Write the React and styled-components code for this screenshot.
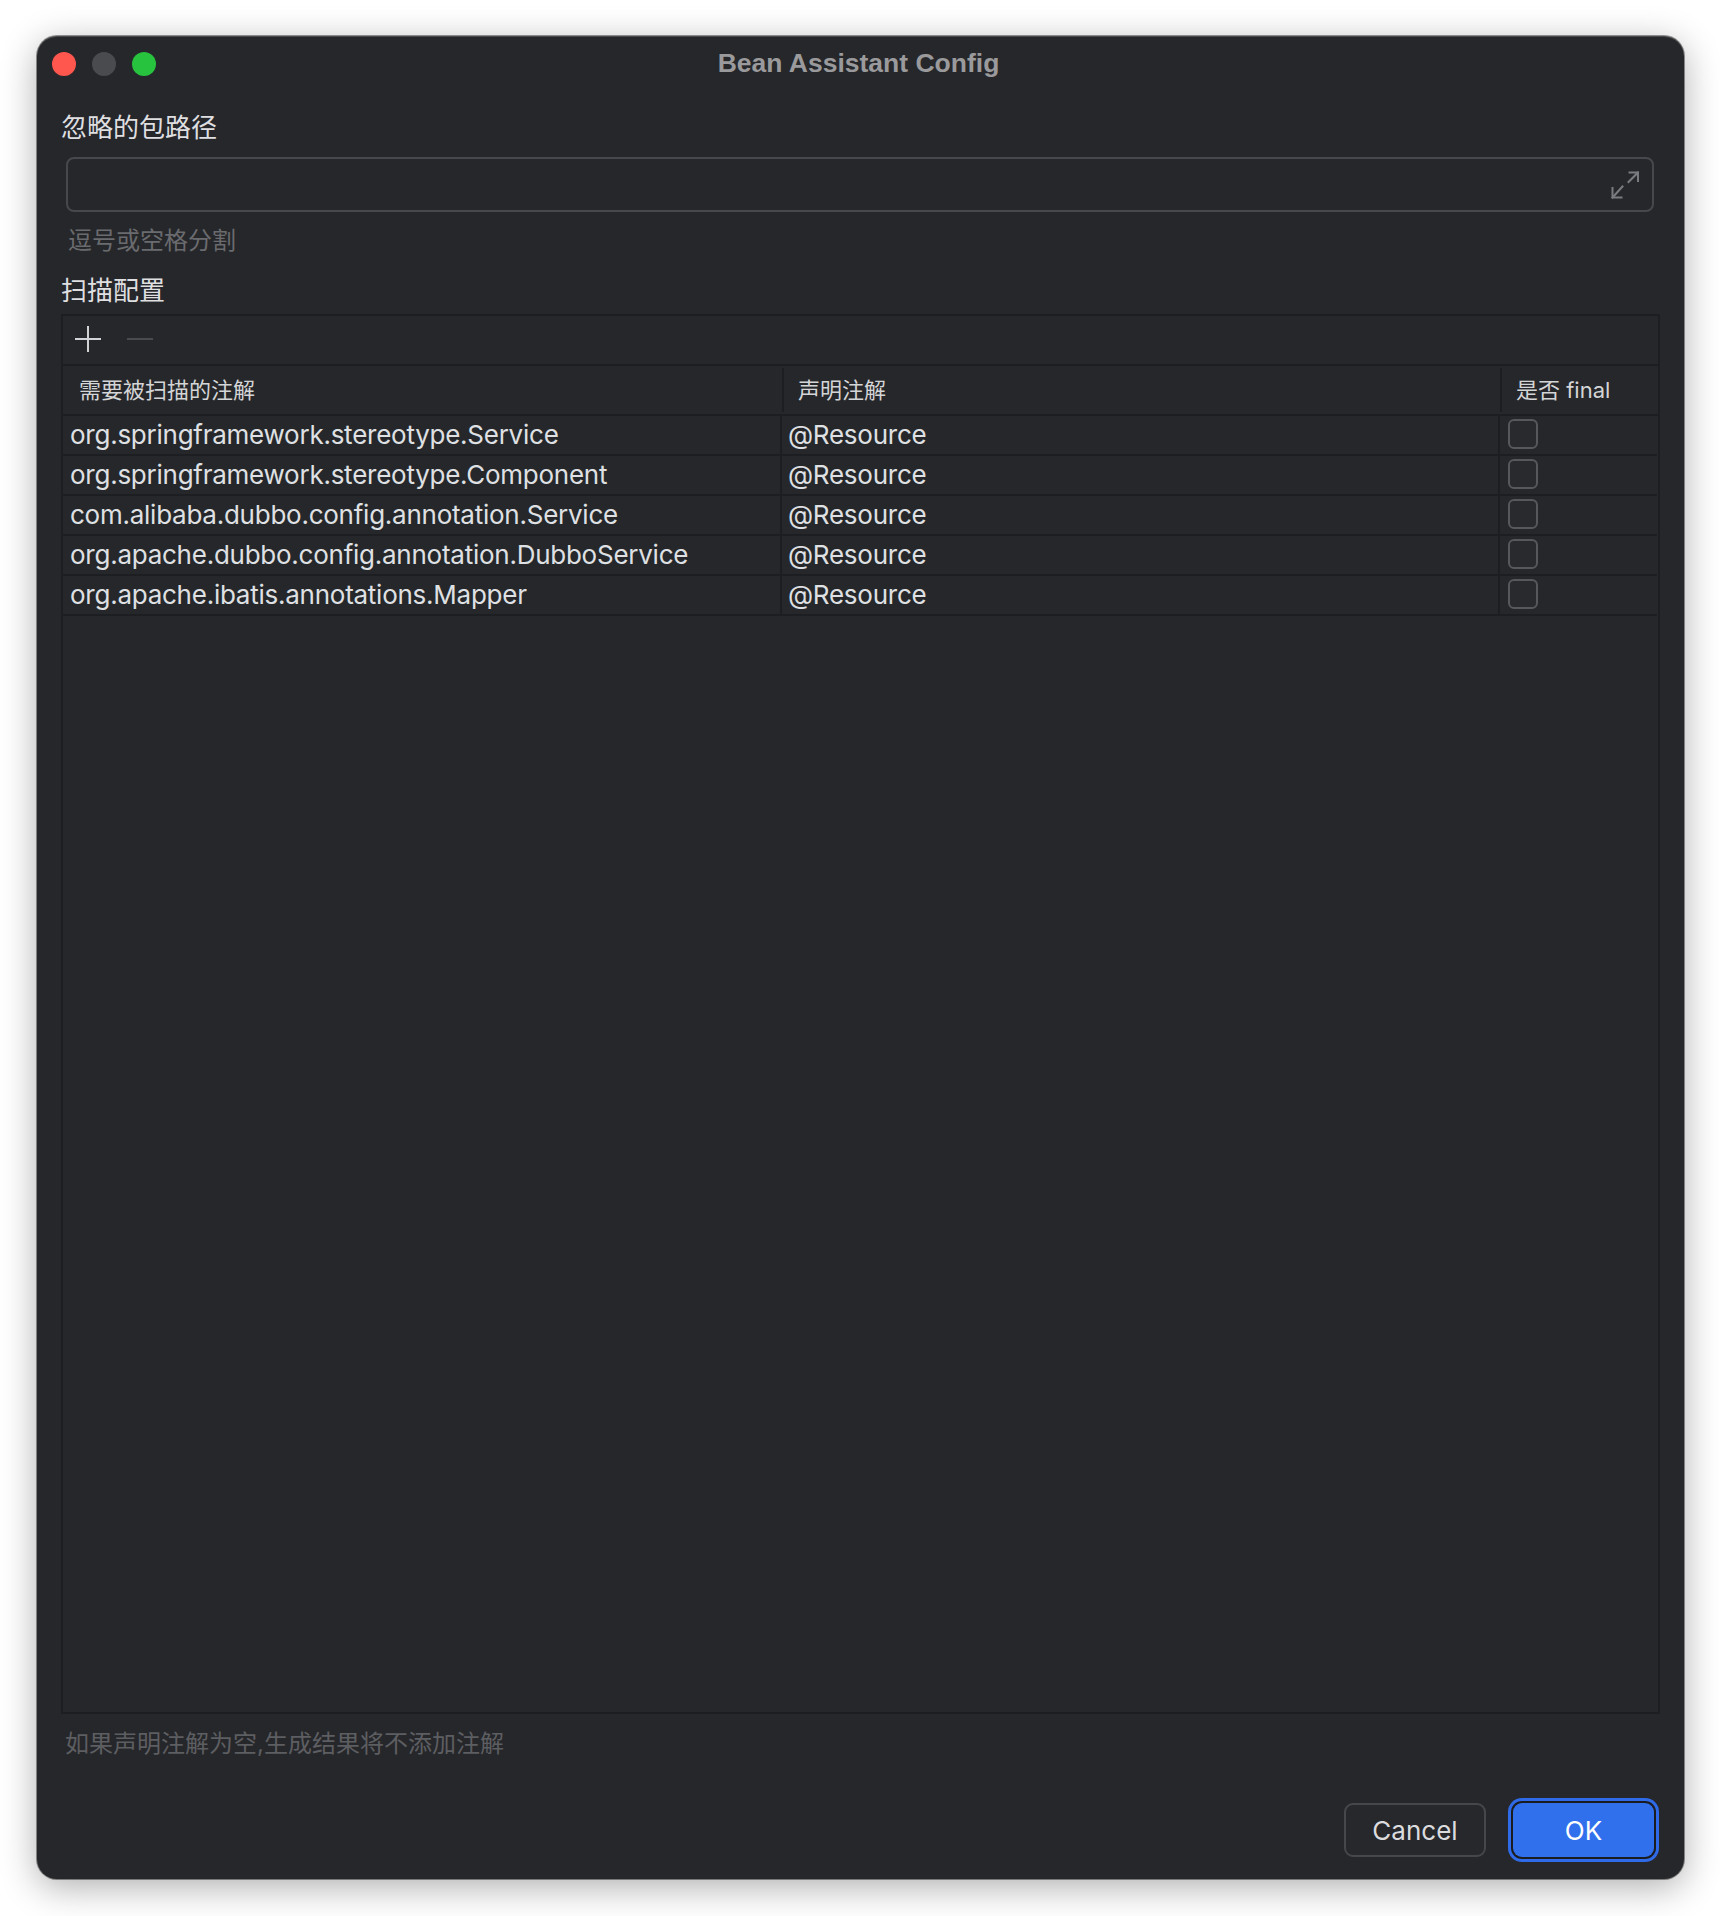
import React from 'react';
import styled, { createGlobalStyle } from 'styled-components';

const GlobalStyle = createGlobalStyle`
  html, body {
    margin: 0;
    padding: 0;
    background: #ffffff;
  }
  * {
    box-sizing: border-box;
  }
`;

const FONT = `Inter, "Noto Sans CJK SC", sans-serif`;

const Page = styled.div`
  padding: 36px 36px 37px 37px;
  font-family: ${FONT};
`;

const Window = styled.div`
  width: 1647px;
  height: 1843px;
  display: flex;
  flex-direction: column;
  background: #26272a;
  border-radius: 20px;
  box-shadow: inset 0 1px 0 rgba(255, 255, 255, 0.16), 0 0 0 1px rgba(0, 0, 0, 0.4),
    0 8px 36px rgba(0, 0, 0, 0.32);
`;

const TitleBar = styled.div`
  height: 56px;
  flex-shrink: 0;
  display: grid;
  grid-template-columns: 1fr auto 1fr;
  align-items: center;
  padding-right: 4px;
`;

const Lights = styled.div`
  display: flex;
  gap: 16px;
  margin-left: 15px;
`;

const Light = styled.span`
  width: 24px;
  height: 24px;
  border-radius: 50%;
  background: ${(p) => p.$color};
`;

const Title = styled.div`
  font-family: "Liberation Sans", Arial, sans-serif;
  font-weight: 700;
  font-size: 26.5px;
  color: #9a9a9c;
  line-height: 1;
  margin-top: -2px;
`;

const Body = styled.div`
  flex: 1;
  display: flex;
  flex-direction: column;
  padding: 18px 24px 17px 24px;
  min-height: 0;
`;

const SectionLabel = styled.div`
  font-size: 26px;
  line-height: 36px;
  color: #dfdfe1;
  margin-top: ${(p) => p.$top || 0}px;
`;

const TextField = styled.div`
  height: 55px;
  margin: 11px 6px 0 5px;
  border: 2px solid #47484d;
  border-radius: 8px;
  display: flex;
  align-items: center;
  justify-content: flex-end;
  padding-right: 13px;
`;

const Hint = styled.div`
  font-size: 24px;
  line-height: 32px;
  color: ${(p) => p.$color || '#6a6b6f'};
  margin-top: ${(p) => p.$top || 0}px;
  padding-left: ${(p) => p.$indent || 0}px;
`;

const TablePanel = styled.div`
  flex: 1;
  margin-top: 5px;
  border: 2px solid #1d1e21;
  display: flex;
  flex-direction: column;
  min-height: 0;
`;

const Toolbar = styled.div`
  height: 50px;
  flex-shrink: 0;
  display: flex;
  align-items: center;
  gap: 26px;
  padding: 0 0 2px 12px;
  border-bottom: 2px solid #1d1e21;
`;

const ToolButton = styled.button`
  width: 26px;
  height: 26px;
  padding: 0;
  border: 0;
  background: none;
  color: ${(p) => (p.disabled ? '#4a4b4f' : '#d2d3d5')};
  display: flex;
  align-items: center;
  justify-content: center;
`;

const HeaderRow = styled.div`
  display: grid;
  grid-template-columns: 719px 718px 1fr;
  height: 50px;
  flex-shrink: 0;
  border-bottom: 2px solid #1d1e21;
`;

const HeaderCell = styled.div`
  display: flex;
  align-items: center;
  font-size: 22px;
  color: #d4d5d7;
  padding: 0 0 4px ${(p) => (p.$first ? 16 : 14)}px;
  margin: 2px 0;
  border-left: ${(p) => (p.$first ? 'none' : '2px solid #1d1e21')};
`;

const Row = styled.div`
  display: grid;
  grid-template-columns: 717px 718px 1fr;
  height: 40px;
  border-bottom: 2px solid #1d1e21;
  margin-right: 1px;
`;

const Cell = styled.div`
  display: flex;
  align-items: center;
  padding-bottom: 2px;
  font-size: 26px;
  letter-spacing: -0.25px;
  color: #dfe0e3;
  white-space: nowrap;
  padding-left: ${(p) => (p.$first ? 7 : 6)}px;
  border-left: ${(p) => (p.$first ? 'none' : '2px solid #1d1e21')};
`;

const CheckCell = styled(Cell)`
  padding-left: 8px;
`;

const Checkbox = styled.span`
  width: 30px;
  height: 30px;
  border: 2px solid #57585c;
  border-radius: 6px;
  background: #292a2d;
`;

const Footer = styled.div`
  display: flex;
  justify-content: flex-end;
  align-items: center;
  gap: 27px;
  height: 64px;
  margin-top: 38px;
  padding-right: 6px;
`;

const Button = styled.button`
  width: ${(p) => (p.$primary ? 141 : 142)}px;
  height: 54px;
  border-radius: 9px;
  font-family: ${FONT};
  font-size: 26px;
  color: ${(p) => (p.$primary ? '#ffffff' : '#dcdcde')};
  background: ${(p) => (p.$primary ? '#3170ec' : '#27282b')};
  border: ${(p) => (p.$primary ? '0' : '2px solid #46474b')};
  box-shadow: ${(p) => (p.$primary ? '0 0 0 2px #1b1c1f, 0 0 0 5px #2f6be8' : 'none')};
  padding: 0;
`;

const ExpandIcon = () => (
  <svg width="28" height="28" viewBox="0 0 28 28" fill="none" stroke="#7a7b80" strokeWidth="2" strokeLinecap="square">
    <path d="M17.5 11 L27 1.5" />
    <path d="M18.5 1.5 H27 V10" />
    <path d="M11.5 15.5 L1.5 26.5" />
    <path d="M1.5 17 V26.5 H10.5" />
  </svg>
);

const PlusIcon = () => (
  <svg width="26" height="26" viewBox="0 0 26 26" stroke="currentColor" strokeWidth="2">
    <path d="M0 13 H26 M13 0 V26" />
  </svg>
);

const MinusIcon = () => (
  <svg width="26" height="26" viewBox="0 0 26 26" stroke="currentColor" strokeWidth="2">
    <path d="M0 13 H26" />
  </svg>
);

const rows = [
  'org.springframework.stereotype.Service',
  'org.springframework.stereotype.Component',
  'com.alibaba.dubbo.config.annotation.Service',
  'org.apache.dubbo.config.annotation.DubboService',
  'org.apache.ibatis.annotations.Mapper',
];

const App = () => {
  return (
    <Page>
      <GlobalStyle />
      <Window>
        <TitleBar>
          <Lights>
            <Light $color="#ff564e" />
            <Light $color="#4a4b4e" />
            <Light $color="#27c33e" />
          </Lights>
          <Title>Bean Assistant Config</Title>
          <span />
        </TitleBar>
        <Body>
          <SectionLabel>忽略的包路径</SectionLabel>
          <TextField>
            <ExpandIcon />
          </TextField>
          <Hint $top={13} $indent={7}>逗号或空格分割</Hint>
          <SectionLabel $top={16}>扫描配置</SectionLabel>
          <TablePanel>
            <Toolbar>
              <ToolButton><PlusIcon /></ToolButton>
              <ToolButton disabled><MinusIcon /></ToolButton>
            </Toolbar>
            <HeaderRow>
              <HeaderCell $first>需要被扫描的注解</HeaderCell>
              <HeaderCell>声明注解</HeaderCell>
              <HeaderCell>是否 final</HeaderCell>
            </HeaderRow>
            {rows.map((name) => (
              <Row key={name}>
                <Cell $first>{name}</Cell>
                <Cell>@Resource</Cell>
                <CheckCell><Checkbox /></CheckCell>
              </Row>
            ))}
          </TablePanel>
          <Hint $top={14} $indent={4} $color="#5d5e62">如果声明注解为空,生成结果将不添加注解</Hint>
          <Footer>
            <Button>Cancel</Button>
            <Button $primary>OK</Button>
          </Footer>
        </Body>
      </Window>
    </Page>
  );
};

export default App;
